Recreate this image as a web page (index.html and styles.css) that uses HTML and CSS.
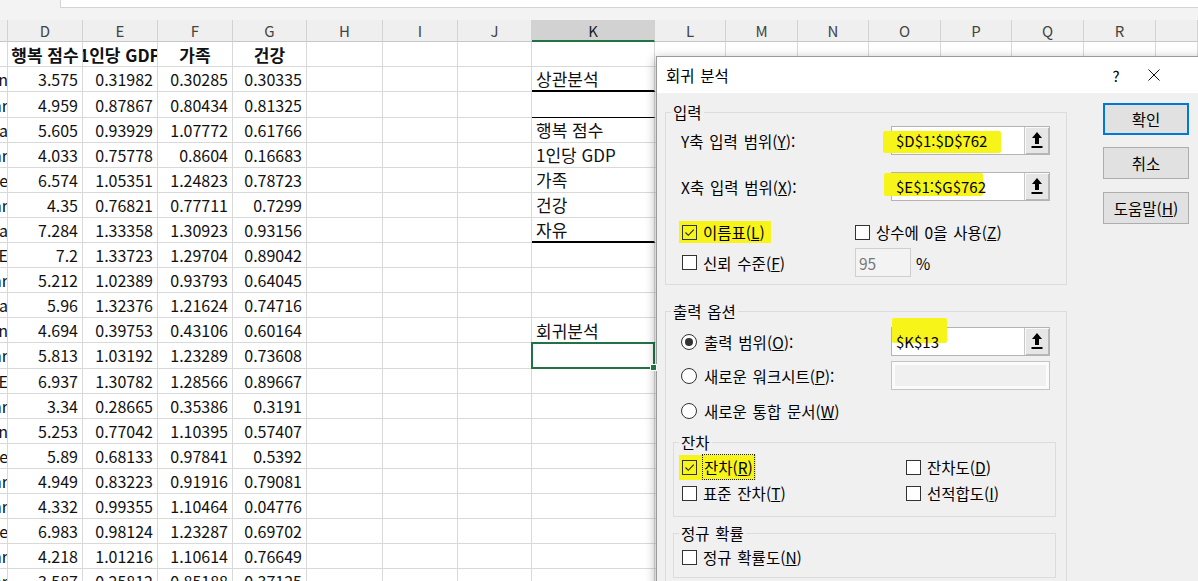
FILE: index.html
```html
<!DOCTYPE html>
<html lang="ko">
<head>
<meta charset="utf-8">
<title>회귀 분석</title>
<link rel="stylesheet" href="styles.css">
</head>
<body>
<div class="app">
  <div class="topbar"><div class="tb-spacer"></div><div class="fbox"></div></div>

  <div class="colhead">
    <div class="h"></div><div class="h">D</div><div class="h">E</div><div class="h">F</div><div class="h">G</div><div class="h">H</div><div class="h">I</div><div class="h">J</div><div class="h h-sel">K</div><div class="h">L</div><div class="h">M</div><div class="h">N</div><div class="h">O</div><div class="h">P</div><div class="h">Q</div><div class="h">R</div><div class="h"></div>
  </div>

  <div class="sheet">
    <div class="row">
      <div class="c"></div><div class="c b">행복 점수</div><div class="c b">1인당 GDP</div><div class="c b">가족</div><div class="c b">건강</div><div class="c"></div><div class="c"></div><div class="c"></div><div class="c k"></div><div class="c"></div><div class="c"></div><div class="c"></div><div class="c"></div><div class="c"></div><div class="c"></div><div class="c"></div><div class="c"></div>
    </div>
    <div class="row"><div class="c cc"><span>n</span></div><div class="c n">3.575</div><div class="c n">0.31982</div><div class="c n">0.30285</div><div class="c n">0.30335</div><div class="c"></div><div class="c"></div><div class="c"></div><div class="c k k-thick">상관분석</div><div class="c rest"></div></div>
    <div class="row"><div class="c cc"><span>ar</span></div><div class="c n">4.959</div><div class="c n">0.87867</div><div class="c n">0.80434</div><div class="c n">0.81325</div><div class="c"></div><div class="c"></div><div class="c"></div><div class="c k k-thin"></div><div class="c rest"></div></div>
    <div class="row"><div class="c cc"><span>Ea</span></div><div class="c n">5.605</div><div class="c n">0.93929</div><div class="c n">1.07772</div><div class="c n">0.61766</div><div class="c"></div><div class="c"></div><div class="c"></div><div class="c k">행복 점수</div><div class="c rest"></div></div>
    <div class="row"><div class="c cc"><span>ar</span></div><div class="c n">4.033</div><div class="c n">0.75778</div><div class="c n">0.8604</div><div class="c n">0.16683</div><div class="c"></div><div class="c"></div><div class="c"></div><div class="c k">1인당 GDP</div><div class="c rest"></div></div>
    <div class="row"><div class="c cc"><span>ne</span></div><div class="c n">6.574</div><div class="c n">1.05351</div><div class="c n">1.24823</div><div class="c n">0.78723</div><div class="c"></div><div class="c"></div><div class="c"></div><div class="c k">가족</div><div class="c rest"></div></div>
    <div class="row"><div class="c cc"><span>ar</span></div><div class="c n">4.35</div><div class="c n">0.76821</div><div class="c n">0.77711</div><div class="c n">0.7299</div><div class="c"></div><div class="c"></div><div class="c"></div><div class="c k">건강</div><div class="c rest"></div></div>
    <div class="row"><div class="c cc"><span>a</span></div><div class="c n">7.284</div><div class="c n">1.33358</div><div class="c n">1.30923</div><div class="c n">0.93156</div><div class="c"></div><div class="c"></div><div class="c"></div><div class="c k k-thick">자유</div><div class="c rest"></div></div>
    <div class="row"><div class="c cc"><span>E</span></div><div class="c n">7.2</div><div class="c n">1.33723</div><div class="c n">1.29704</div><div class="c n">0.89042</div><div class="c"></div><div class="c"></div><div class="c"></div><div class="c k"></div><div class="c rest"></div></div>
    <div class="row"><div class="c cc"><span>ar</span></div><div class="c n">5.212</div><div class="c n">1.02389</div><div class="c n">0.93793</div><div class="c n">0.64045</div><div class="c"></div><div class="c"></div><div class="c"></div><div class="c k"></div><div class="c rest"></div></div>
    <div class="row"><div class="c cc"><span>Ea</span></div><div class="c n">5.96</div><div class="c n">1.32376</div><div class="c n">1.21624</div><div class="c n">0.74716</div><div class="c"></div><div class="c"></div><div class="c"></div><div class="c k"></div><div class="c rest"></div></div>
    <div class="row"><div class="c cc"><span>n</span></div><div class="c n">4.694</div><div class="c n">0.39753</div><div class="c n">0.43106</div><div class="c n">0.60164</div><div class="c"></div><div class="c"></div><div class="c"></div><div class="c k">회귀분석</div><div class="c rest"></div></div>
    <div class="row"><div class="c cc"><span>ar</span></div><div class="c n">5.813</div><div class="c n">1.03192</div><div class="c n">1.23289</div><div class="c n">0.73608</div><div class="c"></div><div class="c"></div><div class="c"></div><div class="c k k-sel"></div><div class="c rest"></div></div>
    <div class="row"><div class="c cc"><span>E</span></div><div class="c n">6.937</div><div class="c n">1.30782</div><div class="c n">1.28566</div><div class="c n">0.89667</div><div class="c"></div><div class="c"></div><div class="c"></div><div class="c k"></div><div class="c rest"></div></div>
    <div class="row"><div class="c cc"><span>ar</span></div><div class="c n">3.34</div><div class="c n">0.28665</div><div class="c n">0.35386</div><div class="c n">0.3191</div><div class="c"></div><div class="c"></div><div class="c"></div><div class="c k"></div><div class="c rest"></div></div>
    <div class="row"><div class="c cc"><span>n</span></div><div class="c n">5.253</div><div class="c n">0.77042</div><div class="c n">1.10395</div><div class="c n">0.57407</div><div class="c"></div><div class="c"></div><div class="c"></div><div class="c k"></div><div class="c rest"></div></div>
    <div class="row"><div class="c cc"><span>ne</span></div><div class="c n">5.89</div><div class="c n">0.68133</div><div class="c n">0.97841</div><div class="c n">0.5392</div><div class="c"></div><div class="c"></div><div class="c"></div><div class="c k"></div><div class="c rest"></div></div>
    <div class="row"><div class="c cc"><span>ar</span></div><div class="c n">4.949</div><div class="c n">0.83223</div><div class="c n">0.91916</div><div class="c n">0.79081</div><div class="c"></div><div class="c"></div><div class="c"></div><div class="c k"></div><div class="c rest"></div></div>
    <div class="row"><div class="c cc"><span>ar</span></div><div class="c n">4.332</div><div class="c n">0.99355</div><div class="c n">1.10464</div><div class="c n">0.04776</div><div class="c"></div><div class="c"></div><div class="c"></div><div class="c k"></div><div class="c rest"></div></div>
    <div class="row"><div class="c cc"><span>ne</span></div><div class="c n">6.983</div><div class="c n">0.98124</div><div class="c n">1.23287</div><div class="c n">0.69702</div><div class="c"></div><div class="c"></div><div class="c"></div><div class="c k"></div><div class="c rest"></div></div>
    <div class="row"><div class="c cc"><span>ar</span></div><div class="c n">4.218</div><div class="c n">1.01216</div><div class="c n">1.10614</div><div class="c n">0.76649</div><div class="c"></div><div class="c"></div><div class="c"></div><div class="c k"></div><div class="c rest"></div></div>
    <div class="row"><div class="c cc"><span>ar</span></div><div class="c n">3.587</div><div class="c n">0.25812</div><div class="c n">0.85188</div><div class="c n">0.37125</div><div class="c"></div><div class="c"></div><div class="c"></div><div class="c k"></div><div class="c rest"></div></div>
  </div>

  <div class="dialog">
    <div class="dlg-title">
      <span class="dlg-name">회귀 분석</span>
      <span class="dlg-help">?</span>
      <svg class="dlg-close" width="12" height="12" viewBox="0 0 12 12"><path d="M0.5 0.5 L11.5 11.5 M11.5 0.5 L0.5 11.5" stroke="#111" stroke-width="1" fill="none"/></svg>
    </div>
    <div class="dlg-body">
      <div class="dlg-main">
        <fieldset class="grp grp-input">
          <legend>입력</legend>
          <div class="frow frow-y">
            <span class="flabel">Y축 입력 범위(<u>Y</u>):</span>
            <div class="ref">
              <span class="hl hl-y"></span>
              <span class="ref-text">$D$1:$D$762</span>
              <span class="pick"><svg width="12" height="17" viewBox="0 0 12 17"><path d="M6 0 L11 6 L8 6 L8 12 L4 12 L4 6 L1 6 Z" fill="#000"/><rect x="0.5" y="14" width="11" height="2" fill="#000"/></svg></span>
            </div>
          </div>
          <div class="frow frow-x">
            <span class="flabel">X축 입력 범위(<u>X</u>):</span>
            <div class="ref">
              <span class="hl hl-x"></span>
              <span class="ref-text">$E$1:$G$762</span>
              <span class="pick"><svg width="12" height="17" viewBox="0 0 12 17"><path d="M6 0 L11 6 L8 6 L8 12 L4 12 L4 6 L1 6 Z" fill="#000"/><rect x="0.5" y="14" width="11" height="2" fill="#000"/></svg></span>
            </div>
          </div>
          <div class="crow crow-1">
            <span class="opt opt-w1"><span class="marked"><span class="cb"><svg width="13" height="13" viewBox="0 0 13 13"><path d="M2.5 6.5 L5.3 9.3 L10.8 3.6" stroke="#222" stroke-width="1.1" fill="none"/></svg></span>이름표(<u>L</u>)</span></span>
            <span class="opt"><span class="cb"></span>상수에 0을 사용(<u>Z</u>)</span>
          </div>
          <div class="crow crow-2">
            <span class="opt opt-w1"><span class="cb"></span>신뢰 수준(<u>F</u>)</span>
            <span class="num-box">95</span>
            <span class="pct">%</span>
          </div>
        </fieldset>

        <fieldset class="grp grp-output">
          <legend>출력 옵션</legend>
          <div class="frow frow-o">
            <span class="flabel"><span class="rb on"></span>출력 범위(<u>O</u>):</span>
            <div class="ref">
              <span class="hl hl-k"></span>
              <span class="ref-text">$K$13</span>
              <span class="pick"><svg width="12" height="17" viewBox="0 0 12 17"><path d="M6 0 L11 6 L8 6 L8 12 L4 12 L4 6 L1 6 Z" fill="#000"/><rect x="0.5" y="14" width="11" height="2" fill="#000"/></svg></span>
            </div>
          </div>
          <div class="frow frow-p">
            <span class="flabel"><span class="rb"></span>새로운 워크시트(<u>P</u>):</span>
            <div class="ref ref-off"></div>
          </div>
          <div class="frow frow-w">
            <span class="flabel"><span class="rb"></span>새로운 통합 문서(<u>W</u>)</span>
          </div>

          <fieldset class="grp sub sub-res">
            <legend>잔차</legend>
            <div class="crow crow-r1">
              <span class="opt opt-w2"><span class="marked marked-r"><span class="cb"><svg width="13" height="13" viewBox="0 0 13 13"><path d="M2.5 6.5 L5.3 9.3 L10.8 3.6" stroke="#222" stroke-width="1.1" fill="none"/></svg></span><span class="focus">잔차(<u>R</u>)</span></span></span>
              <span class="opt"><span class="cb"></span>잔차도(<u>D</u>)</span>
            </div>
            <div class="crow crow-r2">
              <span class="opt opt-w2"><span class="cb"></span>표준 잔차(<u>T</u>)</span>
              <span class="opt"><span class="cb"></span>선적합도(<u>I</u>)</span>
            </div>
          </fieldset>

          <fieldset class="grp sub sub-norm">
            <legend>정규 확률</legend>
            <div class="crow crow-n">
              <span class="opt"><span class="cb"></span>정규 확률도(<u>N</u>)</span>
            </div>
          </fieldset>
        </fieldset>
      </div>

      <div class="dlg-buttons">
        <div class="btn primary">확인</div>
        <div class="btn">취소</div>
        <div class="btn">도움말(<u>H</u>)</div>
      </div>
    </div>
  </div>
</div>
</body>
</html>
```
FILE: styles.css
```css
html, body {
  margin: 0;
  padding: 0;
  overflow: hidden;
  background: #fff;
}

.app {
  width: 1198px;
  height: 581px;
  position: relative;
  overflow: hidden;
  font-family: "Noto Sans CJK KR", "Noto Sans", sans-serif;
  color: #111;
  --cols: 8px 75px 75px 75px 74px 76px 75px 74px 123px 71px 72px 71px 72px 71px 72px 72px 42px;
}

/* formula bar strip */
.topbar {
  height: 20px;
  display: flex;
  background: #f3f3f3;
}
.tb-spacer { width: 60px; }
.fbox {
  flex: 1;
  height: 8px;
  box-sizing: border-box;
  background: #fff;
  border-left: 1px solid #d4d4d4;
  border-bottom: 1px solid #d4d4d4;
}

/* column header */
.colhead {
  display: grid;
  grid-template-columns: var(--cols);
  height: 22.3px;
  background: #efefef;
}
.h {
  box-sizing: border-box;
  border-right: 1px solid #d2d2d2;
  border-bottom: 1px solid #c6c6c6;
  display: flex;
  align-items: center;
  justify-content: center;
  font-size: 15px;
  color: #444;
  line-height: 1;
}
.h-sel {
  background: #d2d2d2;
  border-bottom: 2px solid #217346;
  color: #222;
}

/* grid */
.row {
  display: grid;
  grid-template-columns: var(--cols);
  height: 25.1px;
}
.c {
  box-sizing: border-box;
  border-right: 1px solid #d9d9d9;
  border-bottom: 1px solid #d9d9d9;
  display: flex;
  align-items: center;
  font-size: 16px;
  line-height: 1;
  white-space: nowrap;
  overflow: hidden;
  position: relative;
}
.n {
  justify-content: flex-end;
  padding-right: 4px;
}
.b {
  justify-content: center;
  font-weight: 700;
  font-size: 17px;
}
.cc {
  justify-content: flex-end;
}
.cc span { margin-right: -1px; }
.k {
  padding-left: 4px;
  overflow: visible;
  font-size: 17px;
}
.k-thick { border-bottom: 2px solid #000; }
.k-thin { border-bottom: 1px solid #000; }
.k-sel::after {
  content: "";
  position: absolute;
  left: -1px;
  top: -1px;
  right: -1px;
  bottom: -1px;
  border: 2px solid #217346;
}
.k-sel::before {
  content: "";
  position: absolute;
  right: -3px;
  bottom: -3px;
  width: 5px;
  height: 5px;
  background: #217346;
  border: 1px solid #fff;
  z-index: 1;
}
.rest { grid-column: span 8; }

/* dialog */
.dialog {
  position: absolute;
  left: 656px;
  top: 56px;
  width: 560px;
  height: 540px;
  box-sizing: border-box;
  background: #f0f0f0;
  border: 1px solid #9a9a9a;
  box-shadow: -1px 2px 10px rgba(0, 0, 0, 0.28);
  font-size: 15.5px;
  word-spacing: 1.5px;
  color: #000;
}
.dlg-title {
  height: 36px;
  background: #fff;
  display: flex;
  align-items: center;
  padding-left: 9px;
}
.dlg-name { flex: 1; }
.dlg-help {
  width: 20px;
  text-align: center;
  margin-right: 22px;
  font-size: 15px;
}
.dlg-close { margin-right: 55px; }

.dlg-body {
  display: flex;
  padding: 9px 0 0 8px;
}
.dlg-main { width: 402px; }

.grp {
  margin: 0;
  padding: 0;
  border: 1px solid #dcdcdc;
  min-width: 0;
}
.grp legend {
  margin-left: 5px;
  padding: 0 2px;
  line-height: 20px;
  height: 20px;
  font-size: 15.5px;
}
.grp-input { padding-bottom: 7px; }
.grp-output {
  margin-top: 16px;
  padding-bottom: 30px;
}

.frow {
  display: flex;
  align-items: center;
  height: 29px;
  padding-left: 15px;
}
.flabel {
  width: 210px;
  display: flex;
  align-items: center;
  white-space: nowrap;
}
.frow-y { margin-top: 4px; }
.frow-x { margin-top: 17px; }
.frow-o { margin-top: 6px; }
.frow-p { margin-top: 5px; }
.frow-w { margin-top: 10px; height: 22px; }

.ref {
  position: relative;
  width: 159px;
  height: 29px;
  box-sizing: border-box;
  border: 1px solid #b4b4b4;
  background: #fff;
  display: flex;
  align-items: center;
}
.ref-text {
  position: relative;
  flex: 1;
  padding-left: 4px;
  font-size: 15px;
  word-spacing: 0;
}
.pick {
  width: 25px;
  height: 27px;
  box-sizing: border-box;
  background: #e6e6e6;
  border-left: 1px solid #c8c8c8;
  box-shadow: inset 1px 1px 0 #fafafa, inset -1px -1px 0 #b8b8b8;
  display: flex;
  align-items: center;
  justify-content: center;
}
.ref-off {
  border-color: #c4c4c4;
  background: #f0f0f0;
  box-shadow: inset 0 0 0 3px #fbfbfb;
}

.hl {
  position: absolute;
  background: #f7f41a;
  border-radius: 2px;
}
.hl-y { left: -9px; top: 4px; width: 118px; height: 22px; }
.hl-x { left: -8px; top: 0px; width: 99px; height: 23px; }
.hl-k { left: 0px; top: -10px; width: 55px; height: 25px; }

.crow {
  display: flex;
  align-items: center;
  padding-left: 16px;
  white-space: nowrap;
}
.crow-1 { margin-top: 20px; height: 22px; }
.crow-2 { margin-top: 5px; height: 29px; }
.opt {
  display: flex;
  align-items: center;
}
.opt-w1 { width: 173px; }
.opt-w2 { width: 224px; }

.marked {
  background: #f7f41a;
  margin-left: -3px;
  padding: 0 6px 0 3px;
  height: 22px;
  display: flex;
  align-items: center;
}
.marked .cb { background: transparent; }
.marked-r {
  height: 25px;
  padding-right: 2px;
}
.focus {
  outline: 1px dotted #222;
  outline-offset: 0;
  padding: 2px 1px;
  line-height: 20px;
}

.cb {
  width: 15px;
  height: 15px;
  box-sizing: border-box;
  border: 1px solid #333;
  background: #fff;
  margin-right: 6px;
  display: flex;
  align-items: center;
  justify-content: center;
  flex: none;
}
.rb {
  width: 16px;
  height: 16px;
  box-sizing: border-box;
  border: 1px solid #333;
  border-radius: 50%;
  background: #fff;
  margin-right: 7px;
  display: flex;
  align-items: center;
  justify-content: center;
  flex: none;
}
.rb.on::after {
  content: "";
  width: 8px;
  height: 8px;
  border-radius: 50%;
  background: #333;
}

.num-box {
  width: 56px;
  height: 29px;
  box-sizing: border-box;
  border: 1px solid #cfcfcf;
  background: #f3f3f3;
  color: #777;
  padding-left: 3px;
  display: flex;
  align-items: center;
}
.pct { margin-left: 5px; }

.sub {
  margin: 10px 10px 0 7px;
}
.sub legend { margin-left: 5px; }
.sub-res { padding-bottom: 12px; }
.crow-r1 { margin-top: 4px; height: 22px; padding-left: 8px; }
.crow-r2 { margin-top: 4px; height: 22px; padding-left: 8px; }
.sub-norm {
  margin-top: 6px;
  padding-bottom: 9px;
}
.crow-n { margin-top: 3px; height: 22px; padding-left: 8px; }

.dlg-buttons {
  margin-left: 36px;
  padding-top: 1px;
  display: flex;
  flex-direction: column;
}
.btn {
  width: 86px;
  height: 32px;
  box-sizing: border-box;
  border: 1px solid #adadad;
  background: #e1e1e1;
  display: flex;
  align-items: center;
  justify-content: center;
  font-size: 15.5px;
  word-spacing: 0;
  margin-bottom: 12px;
}
.btn.primary {
  border: 2px solid #0078d7;
}
.btn + .btn + .btn { margin-top: 1px; }
```
